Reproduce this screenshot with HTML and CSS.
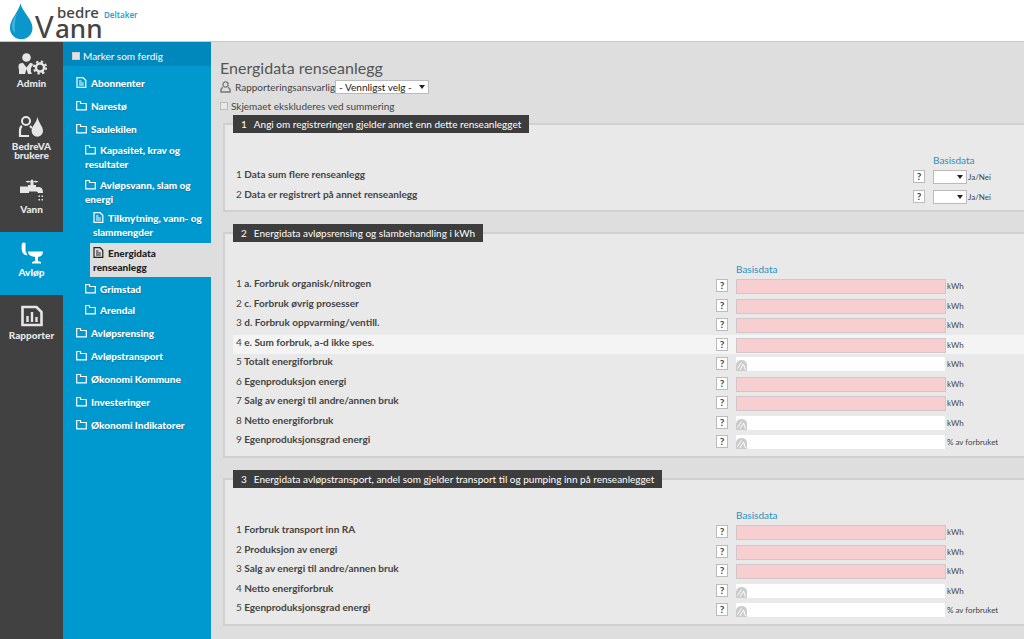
FILE: index.html
```
<!DOCTYPE html>
<html lang="no">
<head>
<meta charset="utf-8">
<title>bedreVann – Energidata renseanlegg</title>
<link rel="stylesheet" href="styles.css">
</head>
<body>
<svg class="defs" aria-hidden="true">
  <symbol id="folder" viewBox="0 0 11 11"><path d="M.7 1.500h3.800v2h5.800v6.300H.7z" fill="none" stroke="currentColor" stroke-width="1.200"/></symbol>
  <symbol id="doc" viewBox="0 0 11 11"><path d="M1 .7h6l2.800 2.600v7H1z" fill="none" stroke="currentColor" stroke-width="1.200"/><path d="M3 4h2.500M3 6h4.800M3 8h4.800" stroke="currentColor"/></symbol>
  <symbol id="calc" viewBox="0 0 11 11"><path d="M0 11V4Q1 0 5.500 0T11 4v7z" fill="#ccc"/><path d="M1.500 8.500l4-6M4 10l3.500-6L9.500 10" fill="none" stroke="#fff"/></symbol>
</svg>
<header class="top">
  <svg class="logo" viewBox="0 0 160 41" role="img" aria-label="bedreVann Deltaker">
    <path d="M20.500 3.500C23 13 32.500 19 32.500 28a11.300 11.300 0 0 1-22.600 0C10 19 18 13 20.500 3.500z" fill="#0b97cb"/>
    <path d="M17 13c-3 5-5 9-5 13 0 3 1 5 3 7-1-7 0-13 2-20z" fill="#46b3dc"/>
    <text x="57" y="18" class="logo-small">bedre</text>
    <text x="35" y="38" class="logo-big">V</text>
    <text x="55" y="38" class="logo-mid">ann</text>
    <text x="104" y="18" class="logo-role">Deltaker</text>
  </svg>
</header>
<div class="layout">
  <nav class="rail" aria-label="Hovedmeny">
    <a href="#"><svg viewBox="0 0 30 22"><circle cx="9.500" cy="4.500" r="4.300" fill="currentColor"/><path d="M2 21v-4q-2-7 3-7h1l3.500 4.500L13 10h1q2 0 2 2-4 4-1 9h-4l-1.500-5L8 21z" fill="currentColor"/><circle cx="23" cy="14.500" r="4" fill="none" stroke="currentColor" stroke-width="2.400"/><circle cx="23" cy="14.500" r="6" fill="none" stroke="currentColor" stroke-width="2.200" stroke-dasharray="2.356"/></svg><span>Admin</span></a>
    <a href="#"><svg viewBox="0 0 30 22"><circle cx="9" cy="5" r="4" fill="none" stroke="currentColor" stroke-width="2"/><path d="M5 10Q3 11 3 15v5h9M13 10l2 2" fill="none" stroke="currentColor" stroke-width="2.200"/><path d="M20.500 1c1 6 5.500 9 5.500 14a5.700 5.700 0 0 1-11.400 0C14.600 10 19.500 7 20.500 1z" fill="currentColor"/></svg><span>BedreVA brukere</span></a>
    <a href="#"><svg viewBox="0 0 30 22"><path d="M8.500 2.500q3-1.500 5 0 0-2 1.500-2t1.500 2q2-1.500 5 0-2 1.500-5 .5V6h2.500v2h3q4 0 4 6h-5q0-1.500-1.500-1.500H12V14H3V7.500h8V6h2.500V3q-3 1-5-.5zM21.500 16.500h1.500v1.500h-1.500zM24.500 16.500h1.500v1.500h-1.500zM21.500 20h1.500v1.500h-1.500zM24.500 20h1.500v1.500h-1.500z" fill="currentColor"/></svg><span>Vann</span></a>
    <a href="#" class="current" aria-current="true"><svg viewBox="0 0 30 22"><path d="M5 1q2-1 3.500 0v8l2 4.500Q3 13 5 1z" fill="currentColor"/><path d="M11 9.500h15q0 5.500-6 5.500-9 0-9-5.500z" fill="currentColor"/><path d="M18 14h3v5l3 1v1.500h-9V20l3-1z" fill="currentColor"/></svg><span>Avløp</span></a>
    <a href="#"><svg viewBox="0 0 30 22"><path d="M5.500 2h14l5 5v13h-19z" fill="none" stroke="currentColor" stroke-width="2.600"/><path d="M10.500 17V11M15 17V7M19.500 17v-5" stroke="currentColor" stroke-width="2.400"/></svg><span>Rapporter</span></a>
  </nav>
  <nav class="side" aria-label="Skjema">
    <label class="mark"><input type="checkbox"> Marker som ferdig</label>
    <ul class="tree">
      <li><a href="#"><svg><use href="#doc"/></svg>Abonnenter</a></li>
      <li><a href="#"><svg><use href="#folder"/></svg>Narestø</a></li>
      <li><a href="#"><svg><use href="#folder"/></svg>Saulekilen</a>
        <ul>
          <li><a href="#"><svg><use href="#folder"/></svg>Kapasitet, krav og resultater</a></li>
          <li><a href="#"><svg><use href="#folder"/></svg>Avløpsvann, slam og energi</a>
            <ul>
              <li><a href="#"><svg><use href="#doc"/></svg>Tilknytning, vann- og slammengder</a></li>
              <li><a href="#" class="active" aria-current="page"><svg><use href="#doc"/></svg>Energidata renseanlegg</a></li>
            </ul>
          </li>
          <li><a href="#"><svg><use href="#folder"/></svg>Grimstad</a></li>
          <li><a href="#"><svg><use href="#folder"/></svg>Arendal</a></li>
        </ul>
      </li>
      <li><a href="#"><svg><use href="#folder"/></svg>Avløpsrensing</a></li>
      <li><a href="#"><svg><use href="#folder"/></svg>Avløpstransport</a></li>
      <li><a href="#"><svg><use href="#folder"/></svg>Økonomi Kommune</a></li>
      <li><a href="#"><svg><use href="#folder"/></svg>Investeringer</a></li>
      <li><a href="#"><svg><use href="#folder"/></svg>Økonomi Indikatorer</a></li>
    </ul>
  </nav>
  <main class="content">
    <h1>Energidata renseanlegg</h1>
    <div class="owner">
      <svg viewBox="0 0 11 12"><circle cx="5.500" cy="3.500" r="2.600" fill="none" stroke="#777" stroke-width="1.300"/><path d="M3 6.500Q1 7 1 9v2h9V9q0-2-2-2.500" fill="none" stroke="#777" stroke-width="1.500"/></svg>
      <label for="owner">Rapporteringsansvarlig</label>
      <div class="pick"><select id="owner"><option>- Vennligst velg -</option></select></div>
    </div>
    <label class="exclude"><input type="checkbox"> Skjemaet ekskluderes ved summering</label>

    <fieldset class="narrow">
      <legend><span>1</span>Angi om registreringen gjelder annet enn dette renseanlegget</legend>
      <div class="head"><span>Basisdata</span></div>
      <div class="rows">
        <div class="row"><label for="a1"><i>1</i> Data sum flere renseanlegg</label><button type="button">?</button><div class="pick"><select id="a1"><option></option></select></div><span class="unit">Ja/Nei</span></div>
        <div class="row"><label for="a2"><i>2</i> Data er registrert på annet renseanlegg</label><button type="button">?</button><div class="pick"><select id="a2"><option></option></select></div><span class="unit">Ja/Nei</span></div>
      </div>
    </fieldset>

    <fieldset>
      <legend><span>2</span>Energidata avløpsrensing og slambehandling i kWh</legend>
      <div class="head"><span>Basisdata</span></div>
      <div class="rows">
        <div class="row"><label for="b1"><i>1</i> a. Forbruk organisk/nitrogen</label><button type="button">?</button><input id="b1" type="text"><span class="unit">kWh</span></div>
        <div class="row"><label for="b2"><i>2</i> c. Forbruk øvrig prosesser</label><button type="button">?</button><input id="b2" type="text"><span class="unit">kWh</span></div>
        <div class="row"><label for="b3"><i>3</i> d. Forbruk oppvarming/ventill.</label><button type="button">?</button><input id="b3" type="text"><span class="unit">kWh</span></div>
        <div class="row hover"><label for="b4"><i>4</i> e. Sum forbruk, a-d ikke spes.</label><button type="button">?</button><input id="b4" type="text"><span class="unit">kWh</span></div>
        <div class="row"><label for="b5"><i>5</i> Totalt energiforbruk</label><button type="button">?</button><div class="auto"><input id="b5" type="text" readonly><svg><use href="#calc"/></svg></div><span class="unit">kWh</span></div>
        <div class="row"><label for="b6"><i>6</i> Egenproduksjon energi</label><button type="button">?</button><input id="b6" type="text"><span class="unit">kWh</span></div>
        <div class="row"><label for="b7"><i>7</i> Salg av energi til andre/annen bruk</label><button type="button">?</button><input id="b7" type="text"><span class="unit">kWh</span></div>
        <div class="row"><label for="b8"><i>8</i> Netto energiforbruk</label><button type="button">?</button><div class="auto"><input id="b8" type="text" readonly><svg><use href="#calc"/></svg></div><span class="unit">kWh</span></div>
        <div class="row"><label for="b9"><i>9</i> Egenproduksjonsgrad energi</label><button type="button">?</button><div class="auto"><input id="b9" type="text" readonly><svg><use href="#calc"/></svg></div><span class="unit">% av forbruket</span></div>
      </div>
    </fieldset>

    <fieldset>
      <legend><span>3</span>Energidata avløpstransport, andel som gjelder transport til og pumping inn på renseanlegget</legend>
      <div class="head"><span>Basisdata</span></div>
      <div class="rows">
        <div class="row"><label for="c1"><i>1</i> Forbruk transport inn RA</label><button type="button">?</button><input id="c1" type="text"><span class="unit">kWh</span></div>
        <div class="row"><label for="c2"><i>2</i> Produksjon av energi</label><button type="button">?</button><input id="c2" type="text"><span class="unit">kWh</span></div>
        <div class="row"><label for="c3"><i>3</i> Salg av energi til andre/annen bruk</label><button type="button">?</button><input id="c3" type="text"><span class="unit">kWh</span></div>
        <div class="row"><label for="c4"><i>4</i> Netto energiforbruk</label><button type="button">?</button><div class="auto"><input id="c4" type="text" readonly><svg><use href="#calc"/></svg></div><span class="unit">kWh</span></div>
        <div class="row"><label for="c5"><i>5</i> Egenproduksjonsgrad energi</label><button type="button">?</button><div class="auto"><input id="c5" type="text" readonly><svg><use href="#calc"/></svg></div><span class="unit">% av forbruket</span></div>
      </div>
    </fieldset>
  </main>
</div>
</body>
</html>
```
FILE: styles.css
```
* { box-sizing: border-box; }
body {
  margin: 0;
  min-height: 100vh;
  display: flex;
  flex-direction: column;
  font: 10px/14px Lato, "Noto Sans", sans-serif;
  color: #444;
  background: #dedede;
}
.defs { position: absolute; width: 0; height: 0; }
a { color: inherit; text-decoration: none; }
ul { list-style: none; margin: 0; padding: 0; }
input, select, button { font: inherit; color: inherit; margin: 0; border-radius: 0; }

.top { background: #fff; border-bottom: 1px solid #c8c8c8; }
.logo { display: block; width: 160px; height: 41px; }
.logo text { font-family: "Noto Sans", sans-serif; fill: #444; }
.logo .logo-small { font-size: 15px; font-weight: 500; }
.logo .logo-big { font-size: 31px; }
.logo .logo-mid { font-size: 26px; font-weight: 500; }
.logo .logo-role { font-size: 8px; font-weight: 600; fill: #2a9fd0; }

.layout { flex: 1; display: flex; }

.rail { width: 63px; flex: none; padding-top: 1px; background: #414141; color: #e6e6e6; }
.rail a {
  display: flex;
  flex-direction: column;
  align-items: center;
  min-height: 63px;
  padding: 10px 4px 0;
  text-align: center;
  font-weight: 900;
  line-height: 9px;
}
.rail svg { width: 30px; height: 22px; margin-bottom: 4px; }
.rail .current { background: #0099cf; color: #fff; }

.side { width: 148px; flex: none; background: #0099cf; color: #fff; font-weight: 900; }
.mark {
  display: flex;
  align-items: center;
  gap: 3px;
  height: 24px;
  padding: 3px 9px 0;
  background: #0088bd;
  font-weight: normal;
}
.mark input, .exclude input {
  appearance: none;
  width: 8px;
  height: 8px;
  background: #e2e2e2;
  border: 1px solid #ccc;
}
.tree { display: flex; flex-direction: column; gap: 1px; padding-top: 6px; }
.tree a { display: block; padding: 4px 0 4px 13px; text-shadow: 0 1px 1px #0077a5; }
.tree svg { width: 11px; height: 11px; margin-right: 4px; vertical-align: -1px; }
.tree ul a { padding: 3px 0 4px 22px; }
.tree ul ul { padding-left: 27px; }
.tree ul ul a { padding: 1px 0 4px 3px; }
.tree ul ul .active {
  padding: 3px 0;
  padding-left: 3px;
  margin-bottom: 2px;
  background: #dedede;
  color: #222;
  text-shadow: none;
}

.content { flex: 1; min-width: 0; padding: 16px 0 14px 9px; }
h1 { margin: 0; font-size: 16px; line-height: 20px; font-weight: normal; color: #555; }
.owner { display: flex; align-items: center; gap: 4px; height: 18px; }
.owner .pick { margin-left: -4px; }
.owner svg { width: 11px; height: 12px; }
.pick { position: relative; }
.pick::after {
  content: "";
  position: absolute;
  right: 4px;
  top: 5px;
  border: 3px solid transparent;
  border-top: 4px solid #222;
  border-bottom: 0;
  pointer-events: none;
}
.pick select {
  appearance: none;
  display: block;
  width: 100%;
  height: 14px;
  padding: 0 3px;
  border: 1px solid #bbb;
  background: #fff;
  line-height: 12px;
}
.owner .pick select { width: 94px; color: #222; }
.exclude { display: flex; align-items: center; gap: 3px; padding: 3px 0 2px; }
.exclude input { background: #e8e8e8; border-color: #bbb; }

fieldset {
  margin: 0 0 12px 3px;
  min-width: 0;
  padding: 0 0 4px 8px;
  border: 2px solid #d0d0d3;
  border-right: 0;
  background: #e9e9e9;
}
legend { padding: 0 8px; background: #3d3d3d; color: #fff; line-height: 18px; }
legend span { margin-right: 7px; }
.head { display: flex; justify-content: flex-end; padding-top: 20px; color: #2b8fc0; }
.head span { width: 288px; }
.narrow .head span { width: 91px; }
.row {
  display: grid;
  grid-template-columns: 1fr 20px 210px 78px;
  align-items: start;
  height: 19px;
  padding-top: 3px;
}
.row:nth-child(odd) { height: 20px; }
.narrow .row { grid-template-columns: 1fr 20px 34px 57px; }
.row > label { padding-left: 3px; font-weight: bold; line-height: 9px; white-space: nowrap; }
.row i { font-style: normal; font-weight: normal; }
.row button {
  width: 12px;
  height: 13px;
  padding: 0;
  border: 1px solid #bbb;
  background: #fff;
  font-weight: bold;
  line-height: 11px;
}
.row input { display: block; width: 100%; height: 15px; padding: 0 2px; border: 1px solid #d2c6c8; background: #f8cfd0; }
.auto { position: relative; margin-right: 1px; }
.row .auto input { height: 14px; border: 0; background: #fff; padding-left: 12px; }
.auto svg { position: absolute; left: 0; bottom: 0; width: 11px; height: 11px; }
.unit { padding-left: 1px; font-size: 8px; line-height: 14px; white-space: nowrap; }
.hover { background: #f4f4f4; }
```
